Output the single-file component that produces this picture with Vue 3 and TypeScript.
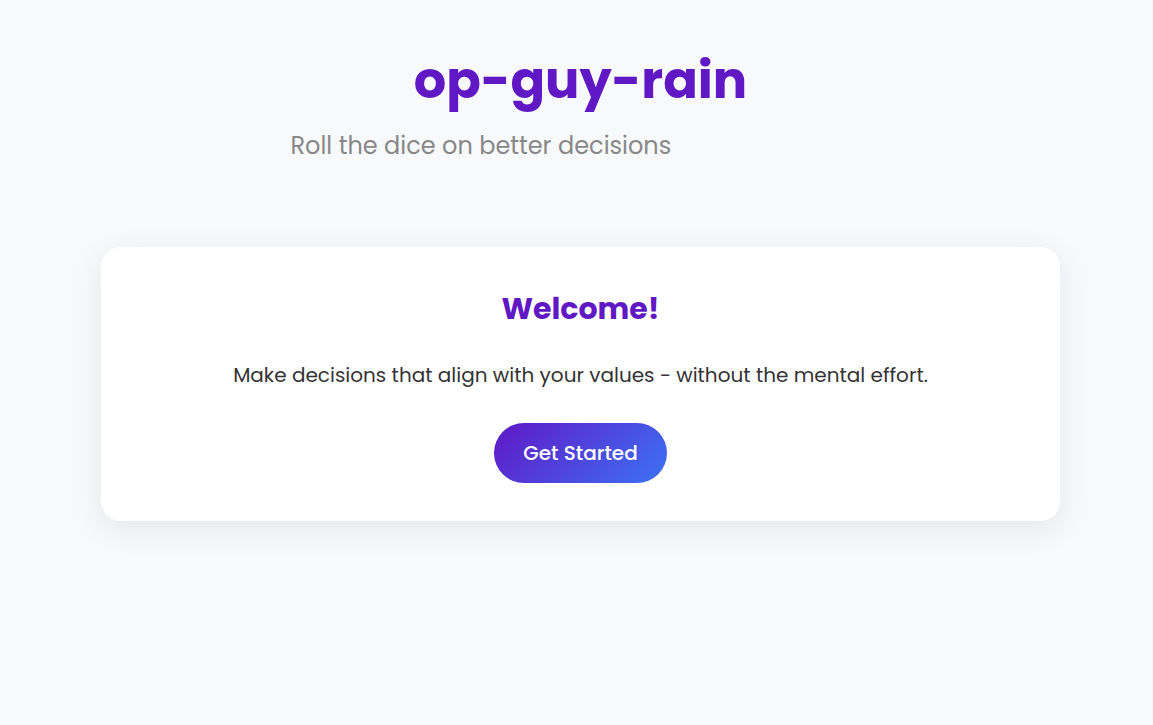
<script setup lang="ts">
const title: string = 'op-guy-rain'
</script>

<template>
  <div class="page">
    <header class="header">
      <h1 class="title">{{ title }}</h1>
      <p class="tagline">Roll the dice on better decisions</p>
    </header>
    <main class="card">
      <h2 class="heading">Welcome!</h2>
      <p class="intro">Make decisions that align with your values - without the mental effort.</p>
      <button class="start" type="button">Get Started</button>
    </main>
  </div>
</template>

<style>
body {
  background: #f8f9fb;
}
</style>

<style scoped>
.page {
  padding: 40px 93px 40px 101px;
  font-family: Poppins, Inter, "Open Sans", sans-serif;
  color: #333333;
}

.header {
  margin-bottom: 83px;
  text-align: center;
}

.title {
  margin: 0;
  font-size: 51px;
  line-height: 80px;
  font-weight: 700;
  color: #6018c4;
}

.tagline {
  max-width: 580px;
  margin: 8px auto 0;
  text-align: left;
  font-size: 24px;
  line-height: 36px;
  color: #888888;
}

.card {
  display: flex;
  flex-direction: column;
  align-items: center;
  padding: 40px 40px 38px;
  border-radius: 20px;
  background: #ffffff;
  box-shadow: 0 8px 32px rgba(0, 0, 0, 0.08);
  text-align: center;
}

.heading {
  margin: 0 0 30px;
  font-size: 30px;
  line-height: 44px;
  font-weight: 700;
  color: #6018c4;
}

.intro {
  margin: 0 0 34px;
  font-size: 20px;
  line-height: 28px;
}

.start {
  padding: 15px 29px;
  border: 0;
  border-radius: 30px;
  background: linear-gradient(135deg, #6018c4, #3c72f4);
  color: #ffffff;
  font-family: inherit;
  font-size: 20px;
  line-height: 30px;
  font-weight: 500;
  cursor: pointer;
}
</style>
